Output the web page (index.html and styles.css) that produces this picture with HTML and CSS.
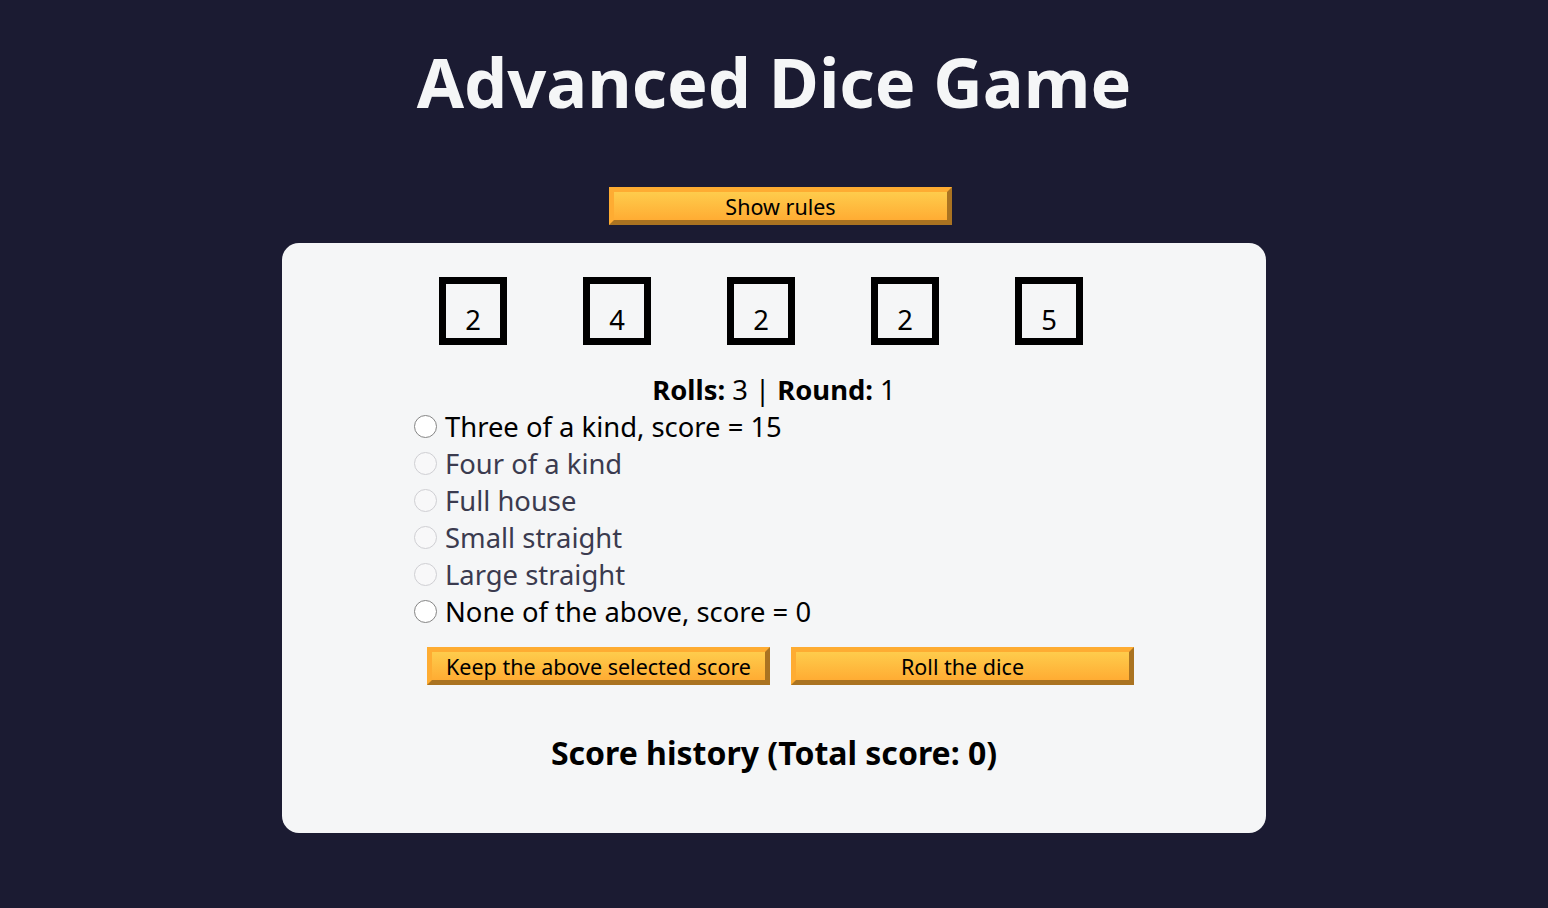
FILE: index.html
```html
<!DOCTYPE html>
<html lang="en">
<head>
<meta charset="UTF-8">
<title>Advanced Dice Game</title>
<link rel="stylesheet" href="styles.css">
</head>
<body>
<header>
  <h1 class="title">Advanced Dice Game</h1>
</header>
<main>
  <button class="btn rules-btn" type="button">Show rules</button>
  <div class="game">
    <div class="dice">
      <div class="die">2</div>
      <div class="die">4</div>
      <div class="die">2</div>
      <div class="die">2</div>
      <div class="die">5</div>
    </div>
    <p class="rounds-text"><strong>Rolls:</strong> 3 | <strong>Round:</strong> 1</p>
    <form class="score-options">
      <div class="option"><input type="radio" name="score-options" id="three"><label for="three">Three of a kind, score = 15</label></div>
      <div class="option"><input type="radio" name="score-options" id="four" disabled><label for="four" class="disabled">Four of a kind</label></div>
      <div class="option"><input type="radio" name="score-options" id="full" disabled><label for="full" class="disabled">Full house</label></div>
      <div class="option"><input type="radio" name="score-options" id="small" disabled><label for="small" class="disabled">Small straight</label></div>
      <div class="option"><input type="radio" name="score-options" id="large" disabled><label for="large" class="disabled">Large straight</label></div>
      <div class="option"><input type="radio" name="score-options" id="none"><label for="none">None of the above, score = 0</label></div>
    </form>
    <div class="actions">
      <button class="btn" type="button">Keep the above selected score</button>
      <button class="btn" type="button">Roll the dice</button>
    </div>
    <h2 class="score-history">Score history (Total score: 0)</h2>
  </div>
</main>
</body>
</html>
```

FILE: styles.css
```css
* {
  margin: 0;
  padding: 0;
  box-sizing: border-box;
}

body {
  background-color: #1b1b32;
  font-family: "Noto Sans", "Open Sans", sans-serif;
  color: #000;
}

.title {
  color: #f5f6f7;
  text-align: center;
  font-size: 68.4px;
  font-weight: 700;
  line-height: normal;
  margin-top: 35px;
}

.btn {
  display: block;
  width: 343px;
  height: 38px;
  padding: 1px 0 0;
  font-family: "Noto Sans", sans-serif;
  font-size: 21.5px;
  line-height: 27px;
  color: #000;
  background-color: #feac32;
  background-image: linear-gradient(#fecc4c, #ffac33);
  border: 5px outset #feac32;
  cursor: pointer;
}

.rules-btn {
  margin: 59px 0 0 609px;
}

.game {
  width: 984px;
  margin: 18px auto 0;
  background-color: #f5f6f7;
  border-radius: 17px;
  padding: 34px 0 59px;
}

.dice {
  display: flex;
  gap: 76px;
  padding-left: 157px;
}

.die {
  width: 68px;
  height: 68px;
  border: 7px solid #000;
  padding: 17px;
  text-align: center;
  font-size: 27.4px;
  line-height: normal;
  display: flex;
  justify-content: center;
  white-space: nowrap;
}

.rounds-text {
  margin-top: 26px;
  text-align: center;
  font-size: 27.4px;
  line-height: 37px;
}

.rounds-text strong {
  font-weight: 700;
}

.score-options {
  margin-left: 124px;
  font-size: 27.4px;
  line-height: 37px;
}

.option input {
  appearance: none;
  -webkit-appearance: none;
  display: inline-block;
  vertical-align: -1px;
  width: 23px;
  height: 23px;
  margin: 0 8px;
  border: 1.5px solid #858585;
  border-radius: 50%;
  background: #fff;
}

.option input:disabled {
  border-color: #cfcfd3;
  background: #f8f8f9;
}

.option label.disabled {
  color: #3b3b4f;
}

.actions {
  display: flex;
  gap: 21px;
  margin: 17px 0 0 145px;
}

.score-history {
  margin-top: 46px;
  text-align: center;
  font-size: 32px;
  font-weight: 700;
  line-height: normal;
}
```
